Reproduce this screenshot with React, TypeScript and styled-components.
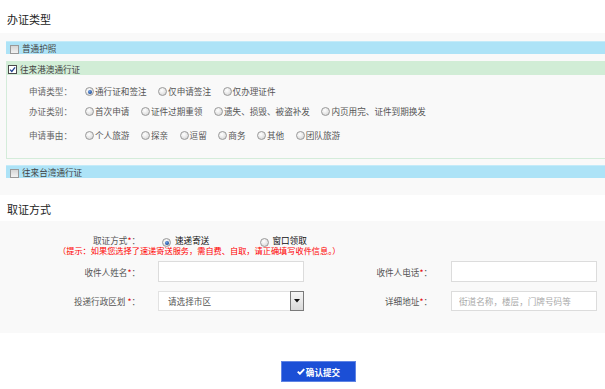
import React from "react";
import styled, { createGlobalStyle } from "styled-components";

const Global = createGlobalStyle`
  html, body { margin: 0; padding: 0; background: #fff; overflow: hidden; }
  body { font-family: "Noto Sans CJK SC", "Noto Sans", sans-serif; color: #333; }
`;

const Page = styled.div`
  width: 637px;
  padding-top: 5px;
`;

const SectionTitle = styled.div<{ $h: number }>`
  height: ${(p) => p.$h}px;
  box-sizing: border-box;
  padding: 8px 0 0 7px;
  font-size: 11px;
  line-height: 13px;
  color: #222;
`;

const Panel = styled.div<{ $pad: string }>`
  background: #f9f9f9;
  padding: ${(p) => p.$pad};
`;

const Bar = styled.div<{ $tone: "blue" | "green" }>`
  display: flex;
  align-items: center;
  height: ${(p) => (p.$tone === "blue" ? 12 : 13)}px;
  padding-left: ${(p) => (p.$tone === "blue" ? 4 : 1)}px;
  background: ${(p) => (p.$tone === "blue" ? "#ade3f7" : "#d1edd6")};
  border-top: 1px solid ${(p) => (p.$tone === "blue" ? "#c4ebf9" : "#d1edd6")};
  font-size: 8.6px;
  color: #444;
`;

const Check = styled.span<{ $checked?: boolean }>`
  width: 9px;
  height: 9px;
  box-sizing: border-box;
  margin-right: 3px;
  margin-top: 2px;
  flex-shrink: 0;
  display: inline-flex;
  align-items: center;
  justify-content: center;
  border: 1px solid ${(p) => (p.$checked ? "#4a4a4a" : "#999")};
  background: ${(p) => (p.$checked ? "#fff" : "linear-gradient(#d6d6d6, #f2f2f2)")};
`;

const Group = styled.div`
  margin: 7px 0 6px;
  border: 1px solid #d4ecda;
  border-top: 0;
`;

const GroupBody = styled.div`
  padding: 6px 0 13px 22px;
`;

const OptionRow = styled.div<{ $mt?: number }>`
  display: flex;
  align-items: center;
  height: 20px;
  margin-top: ${(p) => p.$mt ?? 0}px;
  font-size: 8.6px;
  color: #555;
`;

const RowLabel = styled.span`
  width: 56px;
  flex-shrink: 0;
  color: #666;
`;

const Options = styled.div<{ $gap: number }>`
  display: flex;
  align-items: center;
  gap: ${(p) => p.$gap}px;
`;

const Option = styled.span<{ $strong?: boolean }>`
  display: inline-flex;
  align-items: center;
  white-space: nowrap;
  color: ${(p) => (p.$strong ? "#111" : "#555")};
`;

const Radio = styled.span<{ $checked?: boolean; $gap?: number; $drop?: number }>`
  position: relative;
  width: 9px;
  height: 9px;
  box-sizing: border-box;
  border-radius: 50%;
  flex-shrink: 0;
  margin-right: ${(p) => p.$gap ?? 1}px;
  margin-top: ${(p) => p.$drop ?? 1}px;
  border: 1px solid #9a9a9a;
  background: radial-gradient(circle at 40% 35%, #ffffff 0%, #e6e6e6 55%, #c8c8c8 100%);
  &::after {
    content: "";
    display: ${(p) => (p.$checked ? "block" : "none")};
    position: absolute;
    left: 1.5px;
    top: 1.5px;
    width: 4px;
    height: 4px;
    border-radius: 50%;
    background: radial-gradient(circle at 40% 35%, #6fa0e6 0%, #1d4f9e 70%, #123a7a 100%);
  }
`;

const FormRow = styled.div<{ $h: number; $mt?: number }>`
  display: grid;
  grid-template-columns: 158px 146px 147px 146px;
  align-items: center;
  height: ${(p) => p.$h}px;
  margin-top: ${(p) => p.$mt ?? 0}px;
  font-size: 8.6px;
  color: #555;
`;

const FieldLabel = styled.span<{ $pr: number }>`
  text-align: right;
  padding-right: ${(p) => p.$pr}px;
  white-space: nowrap;
`;

const Star = styled.span`
  color: #e60000;
`;

const Hint = styled.div`
  grid-column: 1 / -1;
  padding-left: 58px;
  font-size: 8.2px;
  line-height: 10px;
  color: #f00;
  white-space: nowrap;
`;

const DeliveryOptions = styled.div`
  grid-column: 2 / -1;
  display: flex;
  align-items: center;
  gap: 51px;
  padding-left: 4px;
`;

const TextBox = styled.input`
  box-sizing: border-box;
  width: 146px;
  height: ${(p) => (p.height as number) || 21}px;
  margin: 0;
  border: 1px solid #dcdcdc;
  background: #fff;
  padding: 0 0 0 7px;
  font-family: inherit;
  font-size: 8.6px;
  outline: none;
  &::placeholder {
    color: #aaa;
  }
`;

const Select = styled.div`
  box-sizing: border-box;
  width: 146px;
  height: 20px;
  display: flex;
  align-items: center;
  border: 1px solid #e2e2e2;
  border-right: 0;
  background: #fff;
`;

const SelectText = styled.span`
  flex: 1;
  padding-left: 9px;
  color: #555;
`;

const SelectButton = styled.span`
  box-sizing: border-box;
  width: 14px;
  height: 20px;
  margin-top: -2px;
  margin-bottom: -2px;
  display: flex;
  align-items: center;
  justify-content: center;
  border: 1px solid #7a7a7a;
  background: linear-gradient(#f6f6f6, #d9d9d9);
`;

const Footer = styled.div`
  display: flex;
  justify-content: center;
  margin-top: 28px;
`;

const SubmitButton = styled.button`
  box-sizing: border-box;
  width: 75px;
  height: 21px;
  display: inline-flex;
  align-items: center;
  justify-content: center;
  gap: 1px;
  border: 1px solid #5f84e4;
  background: #1b4fd6;
  color: #fff;
  font-family: inherit;
  font-size: 8.6px;
  font-weight: 700;
  padding: 0;
  cursor: pointer;
`;

const CheckMark = () => (
  <svg width="7" height="7" viewBox="0 0 10 10">
    <path d="M1.5 5.2 L4 7.8 L8.7 2" fill="none" stroke="#1f3f8f" strokeWidth="1.8" />
  </svg>
);

const BoldCheck = () => (
  <svg width="8" height="7" viewBox="0 0 10 9">
    <path d="M0.8 4.6 L3.6 7.4 L9.2 1.4" fill="none" stroke="#fff" strokeWidth="2.4" />
  </svg>
);

const Arrow = () => (
  <svg width="6" height="4" viewBox="0 0 6 4">
    <path d="M0 0 H6 L3 3.5 Z" fill="#111" />
  </svg>
);

type Opt = { label: string; checked?: boolean };

const RadioRow = ({ label, options, mt }: { label: string; options: Opt[]; mt?: number }) => (
  <OptionRow $mt={mt}>
    <RowLabel>{label}</RowLabel>
    <Options $gap={11.5}>
      {options.map((o) => (
        <Option key={o.label}>
          <Radio $checked={o.checked} />
          {o.label}
        </Option>
      ))}
    </Options>
  </OptionRow>
);

export default function App() {
  return (
    <Page>
      <Global />
      <SectionTitle $h={28}>办证类型</SectionTitle>
      <Panel $pad="8px 0 17px 6px">
        <Bar $tone="blue">
          <Check />
          普通护照
        </Bar>
        <Group>
          <Bar $tone="green">
            <Check $checked>
              <CheckMark />
            </Check>
            往来港澳通行证
          </Bar>
          <GroupBody>
            <RadioRow
              label="申请类型："
              options={[{ label: "通行证和签注", checked: true }, { label: "仅申请签注" }, { label: "仅办理证件" }]}
            />
            <RadioRow
              label="办证类别："
              options={[
                { label: "首次申请" },
                { label: "证件过期重领" },
                { label: "遗失、损毁、被盗补发" },
                { label: "内页用完、证件到期换发" },
              ]}
            />
            <RadioRow
              label="申请事由："
              mt={4}
              options={[
                { label: "个人旅游" },
                { label: "探亲" },
                { label: "逗留" },
                { label: "商务" },
                { label: "其他" },
                { label: "团队旅游" },
              ]}
            />
          </GroupBody>
        </Group>
        <Bar $tone="blue">
          <Check />
          往来台湾通行证
        </Bar>
      </Panel>

      <SectionTitle $h={26}>取证方式</SectionTitle>
      <Panel $pad="11px 0 22px 0">
        <FormRow $h={13}>
          <FieldLabel $pr={18}>
            取证方式<Star>*</Star>：
          </FieldLabel>
          <DeliveryOptions>
            <Option $strong>
              <Radio $checked $gap={4} $drop={6} />
              速递寄送
            </Option>
            <Option $strong>
              <Radio $gap={3} $drop={6} />
              窗口领取
            </Option>
          </DeliveryOptions>
        </FormRow>
        <FormRow $h={10}>
          <Hint>（提示：如果您选择了速递寄送服务，需自费、自取，请正确填写收件信息。）</Hint>
        </FormRow>
        <FormRow $h={21} $mt={6}>
          <FieldLabel $pr={18}>
            收件人姓名<Star>*</Star>：
          </FieldLabel>
          <TextBox />
          <FieldLabel $pr={19}>
            收件人电话<Star>*</Star>：
          </FieldLabel>
          <TextBox />
        </FormRow>
        <FormRow $h={20} $mt={9}>
          <FieldLabel $pr={18}>
            投递行政区划 <Star>*</Star>：
          </FieldLabel>
          <Select>
            <SelectText>请选择市区</SelectText>
            <SelectButton>
              <Arrow />
            </SelectButton>
          </Select>
          <FieldLabel $pr={19}>
            详细地址<Star>*</Star>：
          </FieldLabel>
          <TextBox height={20} placeholder="街道名称，楼层，门牌号码等" />
        </FormRow>
      </Panel>

      <Footer>
        <SubmitButton>
          <BoldCheck />
          确认提交
        </SubmitButton>
      </Footer>
    </Page>
  );
}
